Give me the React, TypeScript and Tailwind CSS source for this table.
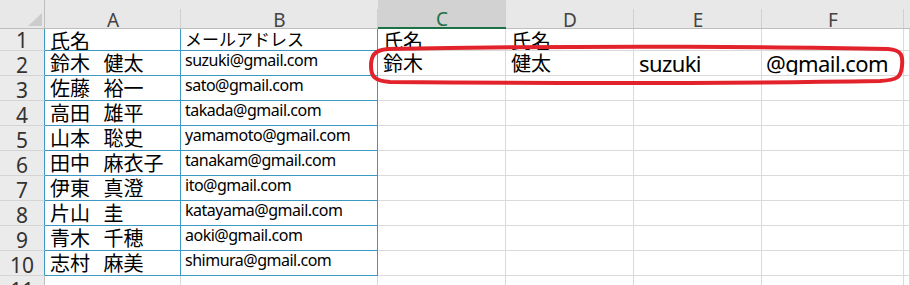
import React from "react";

const names = [
  "氏名",
  "鈴木 健太",
  "佐藤 裕一",
  "高田 雄平",
  "山本 聡史",
  "田中 麻衣子",
  "伊東 真澄",
  "片山 圭",
  "青木 千穂",
  "志村 麻美",
];
const emails = [
  "メールアドレス",
  "suzuki@gmail.com",
  "sato@gmail.com",
  "takada@gmail.com",
  "yamamoto@gmail.com",
  "tanakam@gmail.com",
  "ito@gmail.com",
  "katayama@gmail.com",
  "aoki@gmail.com",
  "shimura@gmail.com",
];

const jp = "font-['Noto_Sans_CJK_JP',sans-serif] text-[20px] leading-[20px] pt-[2px] pl-[5px] [word-spacing:9px] text-black whitespace-nowrap";
const mail = "font-['Noto_Sans','Noto_Sans_CJK_JP',sans-serif] text-[16px] leading-[18px] tracking-[-0.5px] pl-[4px] text-black whitespace-nowrap";
const big = "font-['Noto_Sans',sans-serif] text-[22px] leading-[25px] tracking-[-0.6px] text-black whitespace-nowrap";

function HeaderCell({ label, w, selected }: { label: string; w: string; selected?: boolean }) {
  return (
    <div
      className={`${w} h-full shrink-0 relative flex items-end justify-center after:absolute after:right-0 after:top-[9px] after:bottom-0 after:w-px after:bg-[#d0d0d0] ${
        selected ? "bg-[#d2d2d2] border-b-2 border-[#1e7145] text-[#1e7145]" : "border-b border-[#bdbdbd] text-[#444444]"
      }`}
    >
      <span className="font-['Noto_Sans',sans-serif] text-[19px] leading-[16px]">{label}</span>
    </div>
  );
}

function Row({ n, h, children, blue }: { n: number; h: string; children: React.ReactNode; blue?: boolean }) {
  return (
    <div className={`flex ${h}`}>
      <div
        className={`w-[45px] shrink-0 h-full bg-[#ebebeb] border-b border-[#d4d4d4] border-r ${
          blue ? "border-r-[#3c99c4]" : "border-r-[#bdbdbd]"
        } flex items-end justify-center`}
      >
        <span className="font-['Noto_Sans',sans-serif] text-[21px] leading-[20px] text-[#333333]">{n}</span>
      </div>
      {children}
    </div>
  );
}

export default function App() {
  const grid = "border-r border-b border-[#dadada]";
  const blueCell = "border-r border-b border-[#3c99c4]";
  return (
    <div className="relative w-[910px] h-[285px] overflow-hidden bg-white">
      {/* column header */}
      <div className="flex h-[29px] bg-[#e8e8e8]">
        <div className="w-[45px] shrink-0 h-full border-r border-b border-[#bdbdbd] flex items-end justify-end">
          <svg width="16" height="14" viewBox="0 0 16 14" className="mb-[1px] mr-[1px]">
            <polygon points="15,0 15,13 1,13" fill="#cccccc" />
          </svg>
        </div>
        <HeaderCell label="A" w="w-[136px]" />
        <HeaderCell label="B" w="w-[197px]" />
        <HeaderCell label="C" w="w-[128px]" selected />
        <HeaderCell label="D" w="w-[128px]" />
        <HeaderCell label="E" w="w-[128px]" />
        <HeaderCell label="F" w="w-[142px]" />
        <div className="flex-1 h-full border-b border-[#bdbdbd]" />
      </div>

      {names.map((name, i) => {
        const r = i + 1;
        const h = r === 1 ? "h-[22px]" : "h-[25px]";
        return (
          <Row key={r} n={r} h={h} blue>
            <div className={`w-[136px] shrink-0 h-full overflow-hidden ${blueCell}`}>
              <div className={jp}>{name}</div>
            </div>
            <div className={`w-[197px] shrink-0 h-full overflow-hidden ${blueCell}`}>
              {r === 1 ? (
                <div className="font-['Noto_Sans_CJK_JP',sans-serif] text-[17px] leading-[20px] pl-[4px] text-black whitespace-nowrap">
                  {emails[i]}
                </div>
              ) : (
                <div className={mail}>{emails[i]}</div>
              )}
            </div>
            <div className={`w-[128px] shrink-0 h-full overflow-hidden ${grid}`}>
              {r === 1 && <div className={jp}>氏名</div>}
              {r === 2 && <div className={jp}>鈴木</div>}
            </div>
            <div className={`w-[128px] shrink-0 h-full overflow-hidden ${grid}`}>
              {r === 1 && <div className={jp}>氏名</div>}
              {r === 2 && <div className={jp}>健太</div>}
            </div>
            <div className={`w-[128px] shrink-0 h-full overflow-hidden ${grid}`}>
              {r === 2 && <div className={`${big} pl-[5px]`}>suzuki</div>}
            </div>
            <div className={`w-[142px] shrink-0 h-full overflow-hidden ${grid}`}>
              {r === 2 && <div className={`${big} pl-[4px]`}>@gmail.com</div>}
            </div>
            <div className={`flex-1 h-full ${grid}`} />
          </Row>
        );
      })}

      <Row n={11} h="h-[25px]">
        <div className={`w-[136px] shrink-0 h-full ${grid}`} />
        <div className={`w-[197px] shrink-0 h-full ${grid}`} />
        <div className={`w-[128px] shrink-0 h-full ${grid}`} />
        <div className={`w-[128px] shrink-0 h-full ${grid}`} />
        <div className={`w-[128px] shrink-0 h-full ${grid}`} />
        <div className={`w-[142px] shrink-0 h-full ${grid}`} />
        <div className={`flex-1 h-full ${grid}`} />
      </Row>

      {/* red hand-drawn highlight */}
      <svg className="absolute left-0 top-0 pointer-events-none" width="910" height="285" viewBox="0 0 910 285">
        <path
          d="M 388 49 C 600 45, 800 47, 888 49 C 902 50, 903 56, 902 66 C 901 77, 898 80, 880 81 C 700 84, 500 83, 390 82 C 374 81, 371 76, 371 66 C 371 56, 374 50, 388 49 Z"
          fill="none"
          stroke="#e3232c"
          strokeWidth="4"
        />
      </svg>
    </div>
  );
}
